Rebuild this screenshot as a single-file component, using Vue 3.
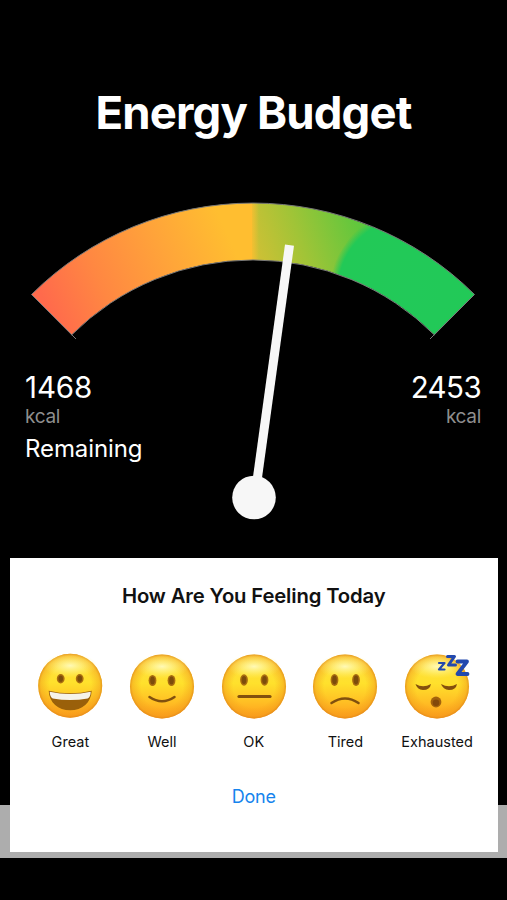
<template>
	<main class="screen">
		<h1 class="title">Energy Budget</h1>

		<section class="budget">
			<svg class="gauge" viewBox="0 0 507 340" width="507" height="340">
				<defs>
					<linearGradient id="low" gradientUnits="userSpaceOnUse" x1="50" y1="315" x2="228" y2="235">
						<stop offset="0" stop-color="#ff6a4c" />
						<stop offset="0.3" stop-color="#ff8742" />
						<stop offset="0.65" stop-color="#ffa33a" />
						<stop offset="1" stop-color="#ffbe30" />
					</linearGradient>
					<linearGradient id="mid" gradientUnits="userSpaceOnUse" x1="252" y1="250" x2="355" y2="214">
						<stop offset="0" stop-color="#d0c035" />
						<stop offset="0.45" stop-color="#a0c437" />
						<stop offset="1" stop-color="#60c73d" />
					</linearGradient>
					<radialGradient id="high" gradientUnits="userSpaceOnUse" cx="410" cy="290" r="80">
						<stop offset="0" stop-color="#22c959" />
						<stop offset="0.9" stop-color="#22c957" />
						<stop offset="1" stop-color="#24c957" stop-opacity="0" />
					</radialGradient>
					<linearGradient id="seam" x1="0" x2="1" y1="0" y2="0">
						<stop offset="0" stop-color="#ffbe30" />
						<stop offset="1" stop-color="#ffbe30" stop-opacity="0" />
					</linearGradient>
				</defs>
				<g transform="translate(0 -180)">
					<path d="M31.500 294.500A314 314 0 0 1 253 203V260A257 257 0 0 0 71.500 335Z" fill="url(#low)" />
					<path d="M252 203A314 314 0 0 1 394 237L368 287A257 257 0 0 0 252 260Z" fill="url(#mid)" />
					<rect x="250" y="203.500" width="9" height="56.500" fill="url(#seam)" />
					<path d="M360 222A314 314 0 0 1 474.500 294.500L434.500 335A257 257 0 0 0 328 271Z" fill="url(#high)" />
					<path class="outline" d="M76 339L31.500 294.500A314 314 0 0 1 474.500 294.500L430 339M71.500 335A257 257 0 0 1 434.500 335" />
					<path class="needle" d="M285 244.500L294 245.700L261 485L252 484Z" />
					<circle class="hub" cx="254" cy="497.500" r="21.800" />
				</g>
			</svg>

			<div class="readings">
				<div class="reading">
					<span class="value">1468</span>
					<span class="unit">kcal</span>
					<span class="caption">Remaining</span>
				</div>
				<div class="reading total">
					<span class="value">2453</span>
					<span class="unit">kcal</span>
				</div>
			</div>
		</section>

		<section class="sheet">
			<div class="card">
				<h2>How Are You Feeling Today</h2>
				<div class="moods">
					<button v-for="mood in moods" :key="mood.label" class="mood">
						<svg class="face" viewBox="0 0 68 68" width="68" height="68">
							<defs>
								<linearGradient :id="`skin-${mood.label}`" x1="0" x2="0" y1="0" y2="1">
									<stop offset="0" stop-color="#ffdc48" />
									<stop offset="0.45" stop-color="#ffe12c" />
									<stop offset="0.75" stop-color="#ffbe24" />
									<stop offset="1" stop-color="#ff9d1c" />
								</linearGradient>
								<radialGradient :id="`rim-${mood.label}`">
									<stop offset="0.65" stop-color="#f29a18" stop-opacity="0" />
									<stop offset="0.92" stop-color="#f0981b" stop-opacity="0.45" />
									<stop offset="1" stop-color="#df8518" stop-opacity="0.8" />
								</radialGradient>
								<radialGradient :id="`shine-${mood.label}`">
									<stop offset="0" stop-color="#fffcc4" stop-opacity="0.9" />
									<stop offset="0.45" stop-color="#fff99a" stop-opacity="0.55" />
									<stop offset="1" stop-color="#fff36a" stop-opacity="0" />
								</radialGradient>
							</defs>
							<g :transform="mood.label === 'Great' ? 'translate(0.2 -0.3)' : 'translate(0 0.5)'">
								<circle cx="34" cy="34" r="32" :fill="`url(#skin-${mood.label})`" />
								<circle cx="34" cy="34" r="32" :fill="`url(#rim-${mood.label})`" />
								<ellipse cx="34" cy="14" rx="27" ry="12" :fill="`url(#shine-${mood.label})`" />

								<template v-if="mood.label !== 'Exhausted'">
									<g v-for="x in mood.eyes" :key="x">
										<ellipse class="eye" :cx="x" :cy="mood.eyeY" rx="3.900" :ry="mood.eyeHeight" />
										<ellipse class="pupil" :cx="x" :cy="mood.eyeY" rx="2.300" :ry="mood.eyeHeight - 1.6" />
									</g>
								</template>

								<template v-if="mood.label === 'Great'">
									<path d="M12.500 39Q34 44 55.500 39C55 51 46 58.500 34 58.500S13 51 12.500 39Z" fill="#9a600a" />
									<path d="M13.500 40Q34 44.500 54.500 40Q54.500 45 51.500 46.800Q34 50 16.500 46.800Q13.700 45 13.500 40Z" fill="#f6f3e9" />
								</template>
								<path v-else-if="mood.label === 'Well'" class="mouth" d="M21.500 44.500Q34 53 46.500 44.500" />
								<path v-else-if="mood.label === 'OK'" class="mouth flat" d="M19 44H50" />
								<path v-else-if="mood.label === 'Tired'" class="mouth" d="M20.500 50.500Q34 41.500 47.500 50.500" />
								<template v-else>
									<path class="lid" d="M12.500 31.500Q20 36 28 31.500Q27 37.500 20 37.500Q14 37 12.500 31.500Z" />
									<path class="lid" d="M38 31.500Q46 36 54 31.500Q53 37.500 46 37.500Q40 37 38 31.500Z" />
									<circle cx="33" cy="49.500" r="5.400" fill="#a3630c" />
									<circle cx="33" cy="50.300" r="3.300" fill="#83490a" />
									<g class="snooze">
										<path d="M36 10.500H41.500L36 17H41.500" stroke-width="2.200" />
										<path d="M44.500 4H51.500L45.500 12.500H52.500" stroke-width="3" />
										<path d="M54.500 9H64L54.500 21.500H64.500" stroke-width="3.800" />
									</g>
								</template>
							</g>
						</svg>
						<span>{{ mood.label }}</span>
					</button>
				</div>
				<button class="done">Done</button>
			</div>
		</section>
	</main>
</template>

<script setup>
const moods = [
	{ label: 'Great', eyes: [24.5, 43.5], eyeY: 27, eyeHeight: 4.7 },
	{ label: 'Well', eyes: [24.5, 43.5], eyeY: 28, eyeHeight: 5.5 },
	{ label: 'OK', eyes: [24, 44.5], eyeY: 27.5, eyeHeight: 5.7 },
	{ label: 'Tired', eyes: [23.5, 45], eyeY: 27.5, eyeHeight: 6 },
	{ label: 'Exhausted' }
]
</script>

<style>
body {
	margin: 0;
	background: #000;
}
</style>

<style scoped>
.screen {
	width: 507px;
	height: 900px;
	box-sizing: border-box;
	padding-top: 80px;
	overflow: hidden;
	background: #000;
	color: #fff;
	font-family: Inter, 'Liberation Sans', sans-serif;
}

.title {
	height: 100px;
	margin: 0;
	font-size: 45.5px;
	font-weight: 700;
	line-height: 66px;
	letter-spacing: -0.85px;
	text-align: center;
	white-space: nowrap;
}

.budget {
	display: grid;
	height: 378px;
}

.gauge,
.readings {
	grid-area: 1 / 1;
}

.outline {
	fill: none;
	stroke: #777;
	stroke-width: 1;
}

.needle,
.hub {
	fill: #f7f7f7;
}

.readings {
	display: flex;
	justify-content: space-between;
	padding: 187px 26px 0 25px;
}

.reading {
	display: flex;
	flex-direction: column;
}

.total {
	text-align: right;
}

.value {
	font-size: 29.5px;
	line-height: 41px;
	letter-spacing: -0.1px;
}

.total .value {
	letter-spacing: -0.6px;
}

.unit {
	color: #8e8e8e;
	font-size: 19px;
	line-height: 18px;
	letter-spacing: -0.3px;
}

.caption {
	margin-top: 3px;
	font-size: 24px;
	line-height: 40px;
	letter-spacing: -0.1px;
}

.sheet {
	height: 300px;
	padding: 0 9px 0 9.5px;
	background: linear-gradient(#000 247px, #adadad 247px);
}

.card {
	display: flex;
	flex-direction: column;
	align-items: center;
	height: 293.5px;
	background: #fff;
	color: #111;
}

h2 {
	margin: 23px 0 0;
	font-size: 20.3px;
	font-weight: 600;
	line-height: 30px;
	letter-spacing: -0.15px;
}

button {
	padding: 0;
	border: 0;
	background: none;
	color: inherit;
	font: inherit;
}

.moods {
	display: flex;
	justify-content: center;
	margin-top: 41px;
}

.mood {
	display: flex;
	flex-direction: column;
	align-items: center;
	width: 91.7px;
	font-size: 14.5px;
	line-height: 20px;
}

.mood span {
	margin-top: 12px;
}

.eye {
	fill: #a96d0f;
}

.pupil {
	fill: #7c4c0c;
}

.mouth {
	fill: none;
	stroke: #81500e;
	stroke-width: 2.5;
	stroke-linecap: round;
}

.flat {
	stroke-width: 3.2;
}

.lid {
	fill: #84500d;
}

.snooze {
	fill: none;
	stroke: #2349ad;
	stroke-linejoin: round;
	stroke-linecap: round;
}

.done {
	margin-top: 32px;
	color: #1684ed;
	font-size: 18px;
	line-height: 26px;
	letter-spacing: -0.2px;
}
</style>
